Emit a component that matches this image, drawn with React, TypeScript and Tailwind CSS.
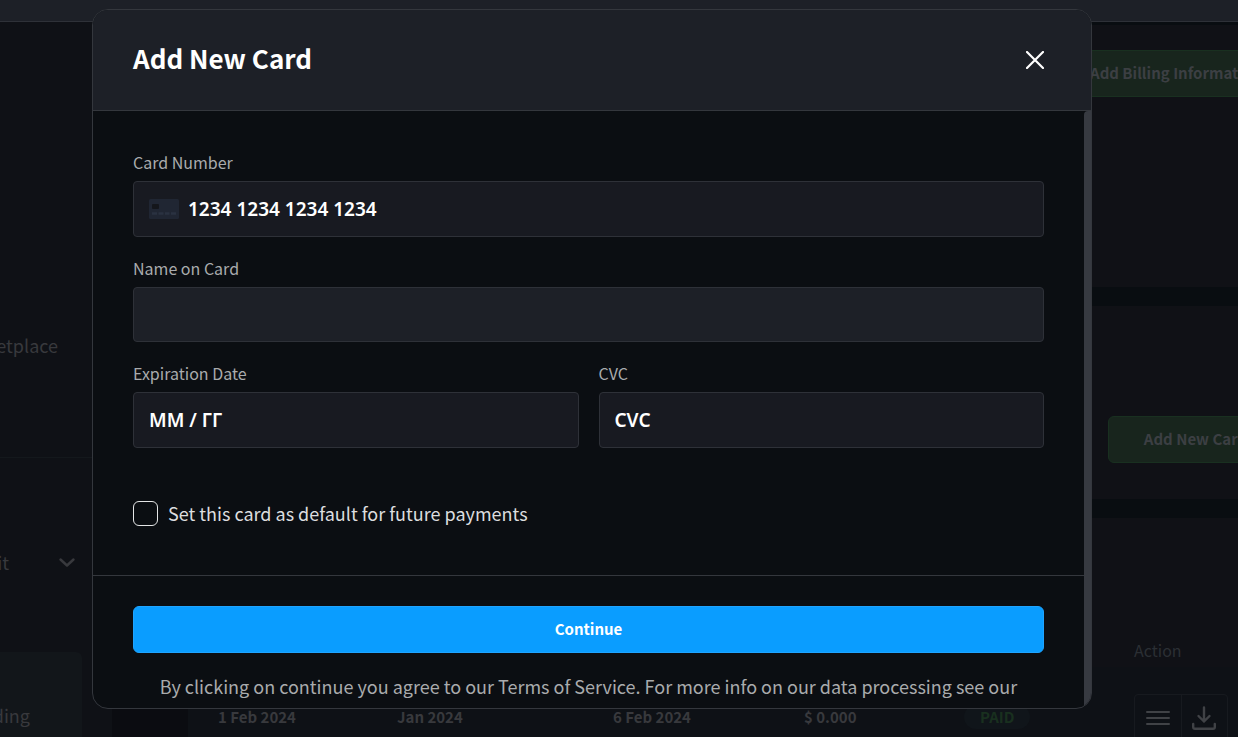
import type { ReactNode } from "react";

const invoice = ["1 Feb 2024", "Jan 2024", "6 Feb 2024", "$ 0.000"];

function GreenButton({ children, className }: { children: ReactNode; className: string }) {
  return (
    <button
      type="button"
      className={`h-[47px] shrink-0 whitespace-nowrap rounded-md border border-[#193020] bg-[#18251d] text-[15px] font-bold text-[#3c3f43] ${className}`}
    >
      {children}
    </button>
  );
}

function Sidebar() {
  return (
    <nav className="flex w-28 shrink-0 flex-col overflow-hidden bg-[#0f1116] text-lg leading-7 text-[#38393d]">
      <a href="#marketplace" className="mt-[309px] flex w-[58px] justify-end">
        Marketplace
      </a>
      <div className="mt-[98px] border-t border-[#14181c]" />
      <button type="button" className="mt-[90px] flex items-center justify-between pr-9">
        <span className="flex w-[9px] justify-end">Profit</span>
        <svg className="h-[18px] w-[18px]" viewBox="0 0 18 18" fill="none" stroke="currentColor" strokeWidth="2.400" strokeLinecap="round" strokeLinejoin="round">
          <path d="M2.500 6.500L9 12.500l6.500-6" />
        </svg>
      </button>
      <a href="#billing" className="mt-[76px] flex h-[100px] w-[82px] rounded-tr-md bg-[#12161a] pt-[49px]">
        <span className="flex w-[30px] justify-end">Funding</span>
      </a>
    </nav>
  );
}

function Billing() {
  return (
    <main className="ml-[76px] flex min-w-0 flex-1 flex-col gap-[19px] bg-[#090d11] pt-[3px]">
      <section className="flex h-[262px] shrink-0 justify-end overflow-hidden bg-[#101116] pt-[25px]">
        <GreenButton className="-mr-[60px] w-[244px]">Add Billing Information</GreenButton>
      </section>
      <section className="flex h-[193px] shrink-0 items-end justify-end overflow-hidden bg-[#101116] pb-9">
        <GreenButton className="-mr-[45px] w-[175px]">Add New Card</GreenButton>
      </section>
      <section className="flex-1 bg-[#101116] pt-[115px]">
        <table className="w-full table-fixed text-left leading-6 text-[#38393d]">
          <colgroup>
            <col className="w-[209px]" />
            <col className="w-[216px]" />
            <col className="w-[191px]" />
            <col className="w-[160px]" />
            <col className="w-[170px]" />
            <col />
          </colgroup>
          <thead>
            <tr className="h-[34px] text-base leading-6 text-[#2b2f34]">
              <th className="pl-[30px] font-normal">Date</th>
              <th className="font-normal">Period</th>
              <th className="font-normal">Paid on</th>
              <th className="font-normal">Amount</th>
              <th className="font-normal">Status</th>
              <th className="font-normal">Action</th>
            </tr>
          </thead>
          <tbody>
            <tr className="bg-[#0e1116] text-[15px] font-bold">
              {invoice.map((cell, index) => (
                <td key={cell} className={index === 0 ? "pt-[25px] pl-[30px]" : "pt-[25px]"}>
                  {cell}
                </td>
              ))}
              <td className="pt-[25px]">
                <span className="inline-flex rounded-full bg-[#10151a] px-4 text-[#19301f]">PAID</span>
              </td>
              <td className="pt-[27px]">
                <div className="flex h-[47px] w-[94px] divide-x divide-[#171a1f] rounded border border-[#171a1f] text-[#404246]">
                  <button type="button" aria-label="Details" className="flex flex-1 items-center justify-center">
                    <svg className="h-6 w-6" viewBox="0 0 24 24" fill="none" stroke="currentColor" strokeWidth="2" strokeLinecap="round">
                      <path d="M1 6h22M1 12h22M1 18h22" />
                    </svg>
                  </button>
                  <button type="button" aria-label="Download" className="flex flex-1 items-center justify-center">
                    <svg className="h-6 w-6" viewBox="0 0 24 24" fill="none" stroke="currentColor" strokeWidth="2.400" strokeLinecap="round" strokeLinejoin="round">
                      <path d="M12 1.500v14M6.500 10L12 15.500l5.500-5.500M1.200 18v3a1.800 1.800 0 0 0 1.800 1.800h18a1.800 1.800 0 0 0 1.800-1.800V18" />
                    </svg>
                  </button>
                </div>
              </td>
            </tr>
          </tbody>
        </table>
      </section>
    </main>
  );
}

const labelStyle = "block text-base leading-[22px] text-[#a9abad]";
const fieldStyle =
  "mt-2 w-full rounded border border-[#2e3138] px-[15px] font-['Noto_Sans','Noto_Sans_CJK_SC',sans-serif] text-[19px] font-semibold text-white outline-none placeholder:text-white placeholder:opacity-100";

function CardDialog() {
  return (
    <div
      role="dialog"
      aria-labelledby="dialog-title"
      className="flex min-w-0 flex-1 flex-col overflow-hidden rounded-2xl border border-[#34373d] bg-[#0b0e12]"
    >
      <header className="flex h-[101px] shrink-0 items-center justify-between border-b border-[#34373d] bg-[#1d2027] pr-[47px] pl-10">
        <h1 id="dialog-title" className="pb-1 text-[26px] leading-9 font-bold text-white">
          Add New Card
        </h1>
        <button type="button" aria-label="Close" className="text-white">
          <svg className="h-[18px] w-[18px]" viewBox="0 0 18 18" fill="none" stroke="currentColor" strokeWidth="2.200" strokeLinecap="round">
            <path d="M1 1l16 16M17 1L1 17" />
          </svg>
        </button>
      </header>
      <div className="flex min-h-0 flex-1">
        <form className="min-w-0 flex-1 overflow-hidden" onSubmit={(event) => event.preventDefault()}>
          <div className="flex flex-col gap-5 px-10 pt-10 pb-12">
            <div>
              <label htmlFor="number" className={labelStyle}>Card Number</label>
              <div className="relative">
                <input id="number" placeholder="1234 1234 1234 1234" className={`${fieldStyle} h-14 bg-[#181a21] pl-[54px]`} />
                <svg className="absolute top-[26px] left-4 h-5 w-[30px]" viewBox="0 0 30 20">
                  <rect width="30" height="20" rx="1.500" fill="#202633" />
                  <rect x="3" y="5" width="7" height="5" rx="1" fill="#14161b" />
                  <path d="M3 14.500h5M9.500 14.500h5M16 14.500h4.500M22 14.500h5" stroke="#2a3241" strokeWidth="2.500" />
                </svg>
              </div>
            </div>
            <div>
              <label htmlFor="name" className={labelStyle}>Name on Card</label>
              <input id="name" className={`${fieldStyle} h-[55px] bg-[#1d2027]`} />
            </div>
            <div className="grid grid-cols-2 gap-5">
              <div>
                <label htmlFor="expiry" className={labelStyle}>Expiration Date</label>
                <input id="expiry" placeholder="MM / ГГ" className={`${fieldStyle} h-14 bg-[#181a21]`} />
              </div>
              <div>
                <label htmlFor="cvc" className={labelStyle}>CVC</label>
                <input id="cvc" placeholder="CVC" className={`${fieldStyle} h-14 bg-[#181a21]`} />
              </div>
            </div>
            <label className="mt-[31px] flex items-center gap-2.5 text-lg leading-7 text-[#dcdddf]">
              <input type="checkbox" className="h-[25px] w-[25px] appearance-none rounded-md border border-[#e4e5e6]" />
              Set this card as default for future payments
            </label>
          </div>
          <div className="border-t border-[#34373d] px-10 pt-[30px]">
            <button
              type="submit"
              className="h-[47px] w-full rounded-md border border-[#1fa4ff] bg-[#0a9dff] text-[15px] font-bold text-white"
            >
              Continue
            </button>
            <p className="mt-[19px] text-center text-lg leading-7 text-[#a9abad]">
              By clicking on continue you agree to our Terms of Service. For more info on our data processing see our
            </p>
          </div>
        </form>
        <div className="w-[7px] shrink-0 rounded-tl bg-[#373a41]" />
      </div>
    </div>
  );
}

export default function App() {
  return (
    <div className="relative flex h-screen flex-col overflow-hidden bg-[#0b0c11] font-['Noto_Sans_CJK_SC',sans-serif]">
      <div className="h-[22px] shrink-0 border-b border-[#2e3138] bg-[#1d2027]" />
      <div className="flex min-h-0 flex-1 overflow-hidden">
        <Sidebar />
        <Billing />
      </div>
      <div className="absolute inset-0 flex pt-[9px] pr-[146px] pb-7 pl-[92px]">
        <CardDialog />
      </div>
    </div>
  );
}
